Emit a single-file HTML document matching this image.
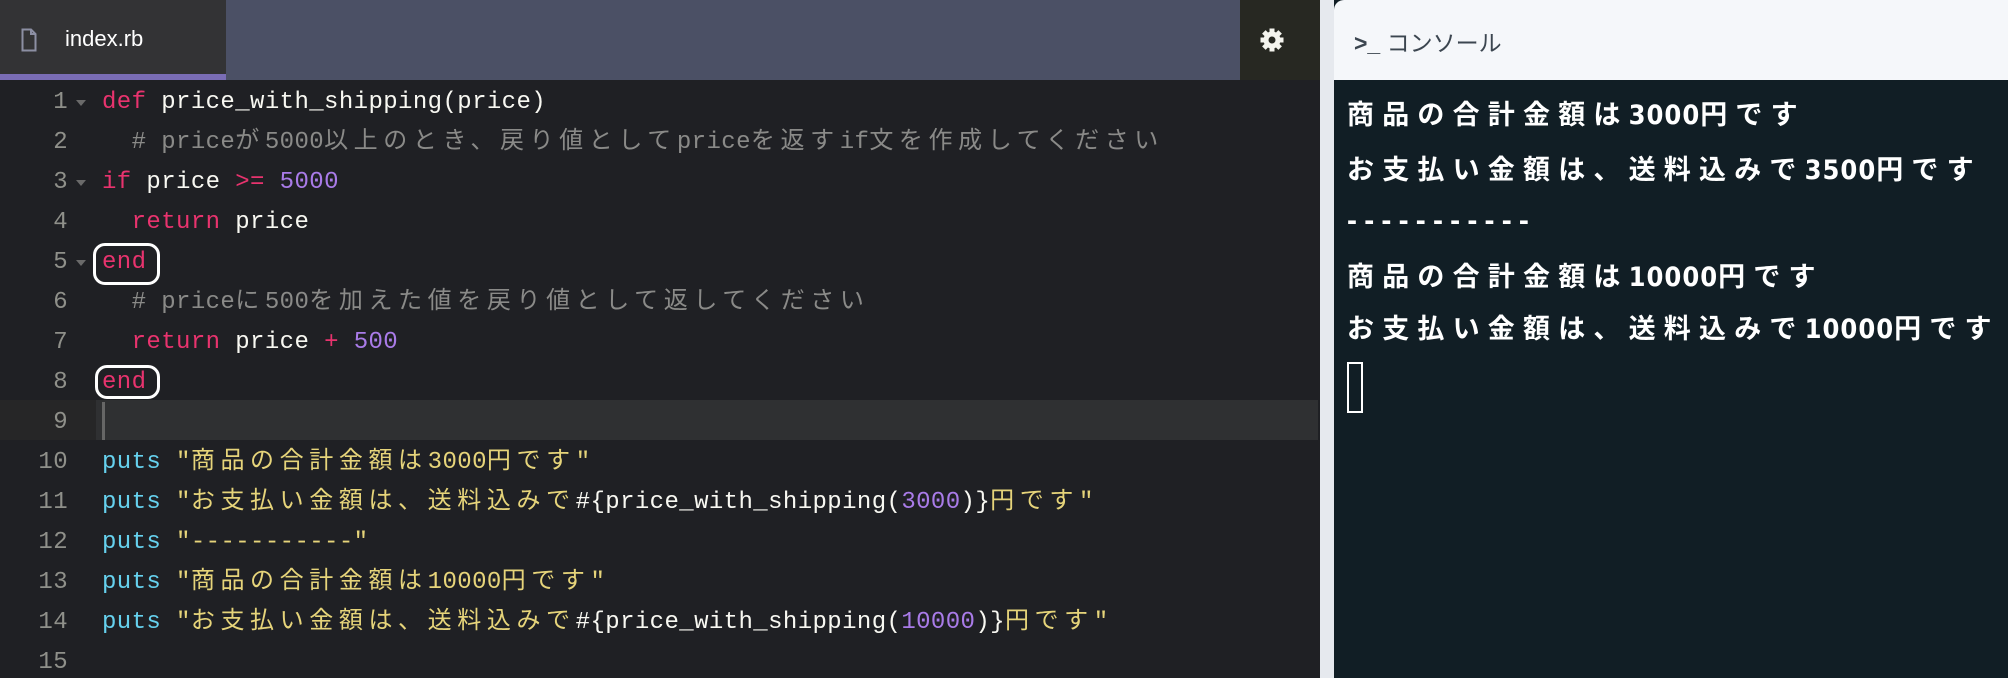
<!DOCTYPE html>
<html><head><meta charset="utf-8"><style>
*{margin:0;padding:0;box-sizing:border-box}
html,body{width:2008px;height:678px;overflow:hidden;background:#1f2024}
body{position:relative;font-family:"Liberation Sans","Noto Sans CJK JP",sans-serif}
#gut{position:absolute;left:1320px;top:0;width:14px;height:678px;background:#e6e9ee}
#ed{position:absolute;left:0;top:0;width:1320px;height:678px;background:#1f2024}
#hdr{position:absolute;left:0;top:0;width:1320px;height:80px;background:#4b5065}
#tab{position:absolute;left:0;top:0;width:226px;height:80px;background:#333335;border-bottom:6px solid #7a6db5}
#tab span{position:absolute;left:65px;top:26px;color:#fff;font-size:22px}
#gear{position:absolute;left:1240px;top:0;width:80px;height:80px;background:#272822}
.ln{position:absolute;left:0;width:1320px;height:40px;font-family:"Liberation Mono","Noto Sans CJK JP",monospace;font-size:24px;line-height:40px;color:#f8f8f2;white-space:pre;letter-spacing:0.4px;padding-top:3px}
.n{position:absolute;left:0;top:3px;width:68px;text-align:right;color:#8f908a;line-height:40px}
.c{position:absolute;left:102px;top:3px;line-height:40px}
.c span{line-height:0}
.ar{position:absolute;left:76px;top:20px;border-left:5px solid transparent;border-right:5px solid transparent;border-top:6px solid #6a6a6a}
.j{font-family:"Noto Sans CJK JP",sans-serif;letter-spacing:5.6px}
.k{color:#e8336e}.m{color:#a97be8}.s{color:#e6d47a}.p{color:#66d1ee}.cm{color:#8a8a88}
#act{position:absolute;left:0;top:400px;width:1318px;height:40px;background:#2f3032}
#actg{position:absolute;left:0;top:400px;width:96px;height:40px;background:#262627}
#cur{position:absolute;left:102px;top:402px;width:3px;height:38px;background:#666}
.circ{position:absolute;border:3px solid #fff;border-radius:12px}
#con{position:absolute;left:1334px;top:0;width:674px;height:678px;background:#111e25}
#chd{position:absolute;left:1334px;top:0;width:674px;height:80px;background:#f5f7fa;border-radius:10px 0 0 0}
#chd span{position:absolute;left:20px;top:24px;font-size:23px;color:#3c4650;font-family:"Liberation Sans","Noto Sans CJK JP",sans-serif}
.o{position:absolute;left:1347px;color:#fff;font-size:27px;letter-spacing:8.2px;font-family:"Liberation Sans","Noto Sans CJK JP",sans-serif;white-space:pre;font-weight:bold}
.o b{letter-spacing:1px;font-family:"DejaVu Sans Condensed","Liberation Sans",sans-serif}
</style></head><body>
<div id="gut"></div>
<div id="ed"></div>
<div id="hdr"></div>
<div id="tab"><svg style="position:absolute;left:21px;top:28px" width="16" height="24" viewBox="0 0 16 24"><path d="M1.5 1.5H10L14.5 6V22.5H1.5Z M10 1.5V6H14.5" fill="none" stroke="#8c8fa3" stroke-width="2"/></svg><span>index.rb</span></div>
<div id="gear"><svg style="position:absolute;left:20px;top:28px" width="24" height="24" viewBox="0 0 24 24"><g fill="#f4f4ee"><circle cx="12" cy="12" r="8.5"/><rect x="9.5" y="0.5" width="5" height="23"/><rect x="0.5" y="9.5" width="23" height="5"/><rect x="9.5" y="0.5" width="5" height="23" transform="rotate(45 12 12)"/><rect x="9.5" y="0.5" width="5" height="23" transform="rotate(-45 12 12)"/></g><circle cx="12" cy="12" r="3.5" fill="#272822"/></svg></div>
<div id="act"></div><div id="actg"></div><div id="cur"></div>

<div class="ln" style="top:80px"><span class="n">1</span><span class="ar"></span><span class="c"><span class="k">def</span> price_with_shipping(price)</span></div>
<div class="ln" style="top:120px"><span class="n">2</span><span class="c cm">  # price<span class="j">が</span>5000<span class="j">以上のとき、戻り値として</span>price<span class="j">を返す</span>if<span class="j">文を作成してください</span></span></div>
<div class="ln" style="top:160px"><span class="n">3</span><span class="ar"></span><span class="c"><span class="k">if</span> price <span class="k">&gt;=</span> <span class="m">5000</span></span></div>
<div class="ln" style="top:200px"><span class="n">4</span><span class="c">  <span class="k">return</span> price</span></div>
<div class="ln" style="top:240px"><span class="n">5</span><span class="ar"></span><span class="c"><span class="k">end</span></span></div>
<div class="ln" style="top:280px"><span class="n">6</span><span class="c cm">  # price<span class="j">に</span>500<span class="j">を加えた値を戻り値として返してください</span></span></div>
<div class="ln" style="top:320px"><span class="n">7</span><span class="c">  <span class="k">return</span> price <span class="k">+</span> <span class="m">500</span></span></div>
<div class="ln" style="top:360px"><span class="n">8</span><span class="c"><span class="k">end</span></span></div>
<div class="ln" style="top:400px"><span class="n">9</span></div>
<div class="ln" style="top:440px"><span class="n">10</span><span class="c"><span class="p">puts</span> <span class="s">"<span class="j">商品の合計金額は</span>3000<span class="j">円です</span>"</span></span></div>
<div class="ln" style="top:480px"><span class="n">11</span><span class="c"><span class="p">puts</span> <span class="s">"<span class="j">お支払い金額は、送料込みで</span></span>#{price_with_shipping(<span class="m">3000</span>)}<span class="s"><span class="j">円です</span>"</span></span></div>
<div class="ln" style="top:520px"><span class="n">12</span><span class="c"><span class="p">puts</span> <span class="s">"-----------"</span></span></div>
<div class="ln" style="top:560px"><span class="n">13</span><span class="c"><span class="p">puts</span> <span class="s">"<span class="j">商品の合計金額は</span>10000<span class="j">円です</span>"</span></span></div>
<div class="ln" style="top:600px"><span class="n">14</span><span class="c"><span class="p">puts</span> <span class="s">"<span class="j">お支払い金額は、送料込みで</span></span>#{price_with_shipping(<span class="m">10000</span>)}<span class="s"><span class="j">円です</span>"</span></span></div>
<div class="ln" style="top:640px"><span class="n">15</span></div>

<div class="circ" style="left:93px;top:243px;width:67px;height:42px"></div>
<div class="circ" style="left:95px;top:365px;width:65px;height:34px"></div>

<div id="con"></div>
<div id="chd"><span><b style="font-weight:bold">&gt;_</b> コンソール</span></div>
<div class="o" style="top:93px">商品の合計金額は<b>3000</b>円です</div>
<div class="o" style="top:148px">お支払い金額は、送料込みで<b>3500</b>円です</div>
<div class="o" style="top:204px;letter-spacing:7.2px;font-size:30px">-----------</div>
<div class="o" style="top:255px">商品の合計金額は<b>10000</b>円です</div>
<div class="o" style="top:307px">お支払い金額は、送料込みで<b>10000</b>円です</div>
<div style="position:absolute;left:1347px;top:362px;width:16px;height:51px;border:2px solid #fff"></div>
</body></html>
